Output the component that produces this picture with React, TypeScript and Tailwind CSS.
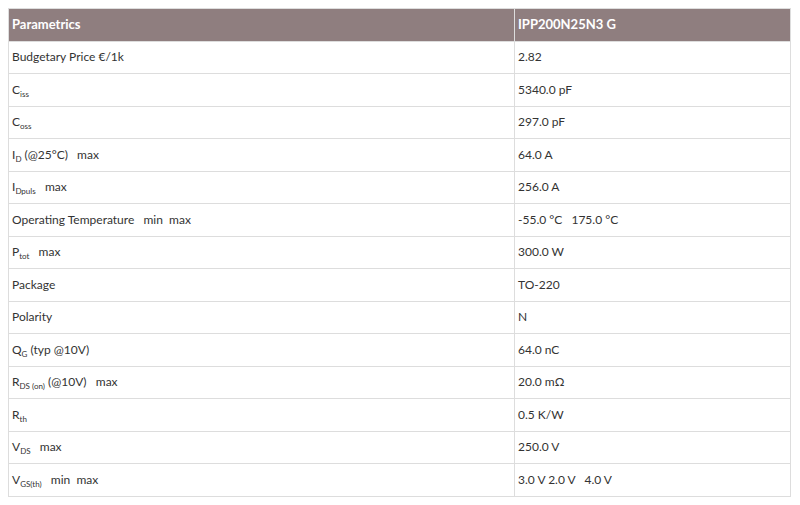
import React from "react";

type Row = { label: React.ReactNode; value: string };

const Sub = ({ children }: { children: React.ReactNode }) => (
  <sub className="text-[8px] align-baseline relative top-[3px]">{children}</sub>
);

const rows: Row[] = [
  { label: "Budgetary Price €/1k", value: "2.82" },
  { label: <>C<Sub>iss</Sub></>, value: "5340.0 pF" },
  { label: <>C<Sub>oss</Sub></>, value: "297.0 pF" },
  { label: <>I<Sub>D</Sub> (@25°C)&nbsp;&nbsp; max</>, value: "64.0 A" },
  { label: <>I<Sub>Dpuls</Sub>&nbsp;&nbsp; max</>, value: "256.0 A" },
  { label: <>Operating Temperature&nbsp;&nbsp; min&nbsp; max</>, value: "-55.0 °C\u00a0\u00a0 175.0 °C" },
  { label: <>P<Sub>tot</Sub>&nbsp;&nbsp; max</>, value: "300.0 W" },
  { label: "Package", value: "TO-220" },
  { label: "Polarity", value: "N" },
  { label: <>Q<Sub>G</Sub> (typ @10V)</>, value: "64.0 nC" },
  { label: <>R<Sub>DS (on)</Sub> (@10V)&nbsp;&nbsp; max</>, value: "20.0 mΩ" },
  { label: <>R<Sub>th</Sub></>, value: "0.5 K/W" },
  { label: <>V<Sub>DS</Sub>&nbsp;&nbsp; max</>, value: "250.0 V" },
  { label: <>V<Sub>GS(th)</Sub>&nbsp;&nbsp; min&nbsp; max</>, value: "3.0 V 2.0 V\u00a0\u00a0 4.0 V" },
];

export default function App() {
  return (
    <div className="w-[800px] h-[505px] bg-white pt-2 pl-2" style={{ fontFamily: "Lato, 'Open Sans', sans-serif" }}>
      <table className="w-[783px] border-collapse text-[12px] text-[#333]">
        <thead>
          <tr className="h-[32.5px] bg-[#8f7e7f] text-white text-[13px]">
            <th className="w-[506px] border border-[#ddd] pl-[3px] text-left font-bold">Parametrics</th>
            <th className="border border-[#ddd] pl-[3px] text-left font-bold">IPP200N25N3 G</th>
          </tr>
        </thead>
        <tbody>
          {rows.map((r, i) => (
            <tr key={i} className="h-[32.5px]">
              <td className="border border-[#ddd] pl-[3px]">{r.label}</td>
              <td className="border border-[#ddd] pl-[3px]">{r.value}</td>
            </tr>
          ))}
        </tbody>
      </table>
    </div>
  );
}
